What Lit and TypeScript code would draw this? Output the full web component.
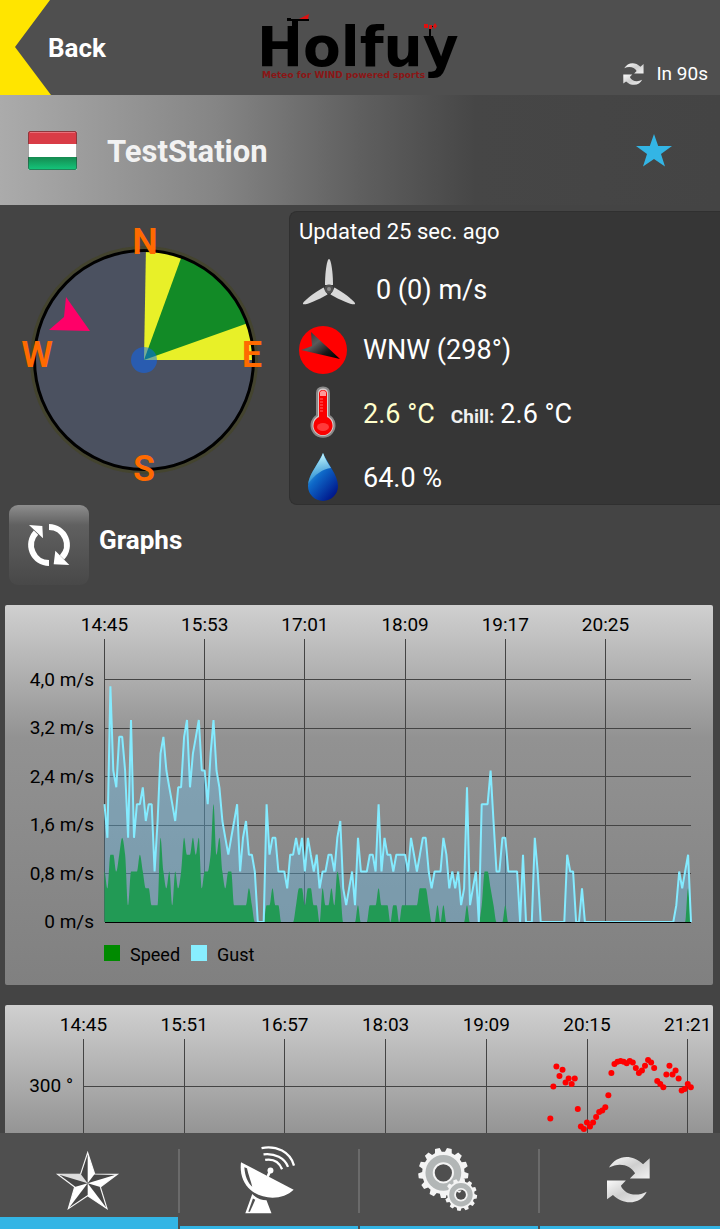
import { LitElement, html, svg, css } from "lit";
import { customElement } from "lit/decorators.js";

const KMH = 1 / 3.6;

// Five-hour history, one sample every two minutes, in km/h.
const GUST = [
  7, 5, 14, 9, 8, 11, 11, 9, 5, 12, 5, 7, 7, 8, 6, 7, 7, 3, 6, 10, 11, 9, 8, 7, 6, 8, 8, 11, 12, 8, 10, 11, 12, 9, 9, 7, 10,
  12, 9, 8, 6, 5, 4, 5, 6, 7, 3, 5, 6, 4, 4, 3, 0, 0, 0, 7, 4, 5, 5, 3, 3, 3, 2, 4, 4, 5, 4, 5, 3, 5, 4, 3, 4, 2, 3, 3, 4, 4,
  3, 5, 6, 2, 1, 2, 3, 1, 5, 3, 3, 3, 4, 4, 3, 7, 3, 5, 4, 4, 3, 4, 4, 4, 4, 3, 5, 4, 3, 4, 5, 5, 3, 2, 3, 3, 3, 5, 4, 2, 3,
  2, 3, 1, 2, 8, 1, 2, 3, 0, 7, 7, 7, 9, 6, 3, 3, 5, 5, 3, 3, 3, 3, 0, 4, 0, 0, 0, 5, 3, 0, 0, 0, 0, 0, 0, 0, 0, 0, 4, 3, 3,
  0, 0, 2, 0, ...Array(30).fill(0), 1, 3, 2, 3, 4, 0,
];
const SPEED = [
  3, 2, 4, 4, 3, 4, 5, 4, 1, 3, 3, 3, 4, 3, 2, 2, 1, 1, 1, 5, 3, 2, 3, 1, 3, 2, 3, 5, 4, 4, 5, 4, 5, 2, 3, 3, 4, 7, 4, 5, 3,
  2, 3, 3, 1, 1, 1, 1, 1, 2, 1, 0, 0, 0, 0, 1, 1, 2, 1, 1, 0, 0, 0, 0, 0, 1, 2, 2, 1, 2, 2, 1, 1, 0, 2, 1, 1, 2, 1, 3, 2, 0,
  0, 0, 0, 0, 1, 0, 0, 0, 1, 1, 1, 2, 1, 1, 1, 0, 1, 1, 0, 1, 1, 1, 1, 1, 1, 2, 2, 2, 1, 0, 0, 1, 0, 1, 0, 0, 0, 0, 0, 0, 0,
  1, 0, 0, 0, 0, 1, 3, 3, 2, 1, 0, 0, 0, 1, 0, ...Array(60).fill(0), 2, 0,
];
const HEADING = [
  260, 300, 325, 313, 321, 305, 310, 303, 310, 272, 250, 247, 255, 250, 255, 262, 268, 270, 274, 289, 317, 328, 331, 332, 331,
  329, 332, 330, 323, 317, 320, 326, 333, 330, 323, 307, 303, 299, 315, 326, 315, 320, 310, 295, 297, 303, 299,
];

type Pt = [number, number];

const linePath = (pts: Pt[]) => "M" + pts.map(([x, y]) => `${x.toFixed(1)},${y.toFixed(1)}`).join("L");

// Monotone cubic through the points, so that peaks stay rounded and never overshoot.
function smoothPath(pts: Pt[]) {
  const n = pts.length;
  const slope = (i: number) => (pts[i + 1][1] - pts[i][1]) / (pts[i + 1][0] - pts[i][0]);
  const tan = pts.map((_, i) => {
    if (i === 0 || i === n - 1) return 0;
    const a = slope(i - 1);
    const b = slope(i);
    return a * b <= 0 ? 0 : (2 * a * b) / (a + b);
  });
  let d = `M${pts[0][0]},${pts[0][1]}`;
  for (let i = 0; i < n - 1; i++) {
    const h = (pts[i + 1][0] - pts[i][0]) / 3;
    const [x0, y0] = pts[i];
    const [x1, y1] = pts[i + 1];
    d += `C${(x0 + h).toFixed(2)},${(y0 + tan[i] * h).toFixed(2)} ${(x1 - h).toFixed(2)},${(y1 - tan[i + 1] * h).toFixed(2)} ${x1.toFixed(2)},${y1.toFixed(2)}`;
  }
  return d;
}

function gearPath(cx: number, cy: number, base: number, tip: number, teeth: number) {
  const pts: Pt[] = [];
  const step = (Math.PI * 2) / teeth;
  for (let i = 0; i < teeth; i++) {
    const shape: [number, number][] = [[-0.34, base], [-0.2, tip], [0.2, tip], [0.34, base]];
    for (const [o, r] of shape) {
      const a = (i + o + 0.25) * step;
      pts.push([cx + Math.cos(a) * r, cy + Math.sin(a) * r]);
    }
  }
  return linePath(pts) + "Z";
}

const refreshShape = svg`
  <defs>
    <linearGradient id="silver" x1="0" y1="0" x2="1" y2="1">
      <stop offset="0" stop-color="#fafafa" /><stop offset=".5" stop-color="#cfcfcf" /><stop offset="1" stop-color="#f2f2f2" />
    </linearGradient>
  </defs>
  <path fill="url(#silver)" d="M6,34C26,0 71,-12 109,24L129,6V67H69L85,51C71,25 36,17 6,34Z" />
  <path fill="url(#silver)" d="M0,73H57L42,89C51,113 86,125 120,107C106,140 56,154 18,117L0,130Z" />`;

@customElement("wind-compass")
class WindCompass extends LitElement {
  static styles = css`
    :host { display: block; }
    svg { display: block; width: 100%; height: auto; }
    .mark { font: 600 36px Roboto, sans-serif; fill: #ff6a00; text-anchor: middle; }
  `;
  private wedge(from: number, to: number, r: number) {
    const p = (deg: number) => {
      const a = (deg * Math.PI) / 180;
      return `${(Math.sin(a) * r).toFixed(2)},${(-Math.cos(a) * r).toFixed(2)}`;
    };
    return `M0,0L${p(from)}A${r},${r} 0 0 1 ${p(to)}Z`;
  }
  render() {
    return html`<svg viewBox="-144 -155 288 300" role="img" aria-label="Wind direction compass">
      <circle r="112" fill="none" stroke="#44442f" stroke-width="4" />
      <circle r="109" fill="#4b5160" />
      <path d=${this.wedge(1, 90, 109)} fill="#e8f028" />
      <path d=${this.wedge(20, 70.5, 109)} fill="#128a26" />
      <circle r="109.500" fill="none" stroke="#000" stroke-width="3" />
      <circle r="13" fill="#0767ff" fill-opacity=".5" />
      <path d="M-78,-63L-54,-29L-95,-30L-80,-43Z" fill="#ff0068" />
      <text class="mark" x="1" y="-106">N</text>
      <text class="mark" x="108" y="7">E</text>
      <text class="mark" x="0" y="121">S</text>
      <text class="mark" x="-107" y="7">W</text>
    </svg>`;
  }
}

const chartStyles = css`
  :host { display: block; background: linear-gradient(#d0d0d0, #929292 35%, #808080); border-radius: 2px; }
  svg { display: block; width: 100%; height: auto; }
  text { font: 19px Roboto, sans-serif; fill: #000; }
  .time { text-anchor: middle; }
  .value { text-anchor: end; }
  .legend { font-size: 18px; }
  .grid { stroke: #444; stroke-width: 1; shape-rendering: crispEdges; }
  .base { stroke: #000; stroke-width: 1; shape-rendering: crispEdges; }
`;

@customElement("speed-chart")
class SpeedChart extends LitElement {
  static styles = chartStyles;
  render() {
    const left = 99.5;
    const right = 686;
    const bottom = 317;
    const perMs = 60.6;
    const toPts = (data: number[]): Pt[] =>
      data.map((v, i) => [left + (i * (right - left)) / (data.length - 1), bottom - v * KMH * perMs]);
    const close = `L${right},${bottom}L${left},${bottom}Z`;
    const gust = linePath(toPts(GUST));
    const times = ["14:45", "15:53", "17:01", "18:09", "19:17", "20:25"];
    const levels = ["0", "0,8", "1,6", "2,4", "3,2", "4,0"];
    return html`<svg viewBox="0 0 708 380" role="img" aria-label="Wind speed and gust">
      ${times.map((t, i) => {
        const x = left + i * 100.2;
        return svg`<text class="time" x=${x} y="26">${t}</text><line class="grid" x1=${x} x2=${x} y1="34" y2=${bottom} />`;
      })}
      ${levels.map((l, i) => {
        const y = bottom - i * 48.5;
        return svg`<text class="value" x="89" y=${y + 6}>${l} m/s</text><line class="grid" x1=${left} x2=${right} y1=${y} y2=${y} />`;
      })}
      <path d=${gust + close} fill="#64c5fa" fill-opacity=".33" />
      <path d=${smoothPath(toPts(SPEED)) + close} fill="#229a55" />
      <path d=${gust} fill="none" stroke="#84ebff" stroke-width="2" stroke-linejoin="bevel" />
      <line class="base" x1=${left} x2=${right} y1="317.5" y2="317.5" />
      <rect x="99" y="340" width="16" height="16" fill="#008a00" />
      <text class="legend" x="125" y="356">Speed</text>
      <rect x="186" y="340" width="16" height="16" fill="#88eeff" />
      <text class="legend" x="212" y="356">Gust</text>
    </svg>`;
  }
}

@customElement("direction-chart")
class DirectionChart extends LitElement {
  static styles = chartStyles;
  render() {
    const times = ["14:45", "15:51", "16:57", "18:03", "19:09", "20:15", "21:21"];
    const level = 81.5;
    return html`<svg viewBox="0 0 708 380" role="img" aria-label="Wind direction">
      ${times.map((t, i) => {
        const x = 78.5 + i * 100.7;
        return svg`<text class="time" x=${x} y="26">${t}</text><line class="grid" x1=${x} x2=${x} y1="34" y2="317" />`;
      })}
      <text class="value" x="68" y="87">300 °</text>
      <line class="grid" x1="78.500" x2="686" y1=${level} y2=${level} />
      ${HEADING.map((h, i) => svg`<circle cx=${545.3 + i * 3.055} cy=${level - (h - 300) * 0.8} r="3" fill="#f00" />`)}
    </svg>`;
  }
}

@customElement("app-root")
class AppRoot extends LitElement {
  static styles = css`
    :host {
      display: flex;
      flex-direction: column;
      height: 100vh;
      background: #444;
      color: #fff;
      font-family: Roboto, sans-serif;
    }
    * { box-sizing: border-box; }
    button { border: 0; padding: 0; margin: 0; background: none; color: inherit; font: inherit; cursor: pointer; }
    h1, h2, ul, p { margin: 0; padding: 0; font-weight: inherit; }
    svg { display: block; flex: none; overflow: visible; }

    .top { display: grid; grid-template-columns: 1fr auto 1fr; flex: none; height: 95px; background: #4f4f4f; }
    .back { display: flex; align-items: center; justify-self: start; font-size: 26px; font-weight: 700; }
    .timer { display: flex; align-items: center; justify-self: end; align-self: end; gap: 12px; padding: 0 12px 8px 0; font-size: 19px; line-height: 26px; }
    .brand { font: 700 55px "DejaVu Sans", sans-serif; }
    .motto { font: 700 9px "DejaVu Sans", sans-serif; fill: #8a1616; }

    .station { display: flex; align-items: center; flex: none; height: 110px; padding: 0 48px 0 28px; background: linear-gradient(90deg, #ababab, #858585 30%, #5f5f5f 50%, #464646 66%, #444); }
    .name { flex: 1; padding: 2px 0 0 30px; font-size: 31px; font-weight: 700; color: #f2f2f2; }

    .content { flex: 1; min-height: 0; overflow-y: auto; scrollbar-width: none; }
    .current { display: grid; grid-template-columns: 2fr 3fr; }
    .readings { margin: 6px 0 0 1px; padding: 6px 9px 2px; background: #363636; border: solid #303030; border-width: 1px 0 1px 1px; border-radius: 8px 0 0 8px; }
    .updated { padding-bottom: 20px; font-size: 22px; line-height: 28px; }
    .rows { display: flex; flex-direction: column; gap: 12px; }
    .row { display: flex; align-items: center; gap: 16px; height: 48px; font-size: 27px; white-space: nowrap; }
    .tall { height: 56px; }
    .temp { color: #ffffcc; }
    .chill { font-size: 19px; font-weight: 700; color: #f0f0f0; padding-right: 6px; }

    .graphs { display: flex; align-items: start; gap: 10px; padding: 0 9px 20px; }
    .switch { display: grid; place-items: center; width: 80px; height: 80px; border-radius: 9px; background: linear-gradient(#8e8e8e, #606060 25%, #484848); }
    .heading { font-size: 26px; font-weight: 700; line-height: 70px; }
    .charts { display: flex; flex-direction: column; gap: 20px; padding: 0 7px 20px 5px; }

    .tabs { display: grid; grid-template-columns: repeat(4, 1fr); flex: none; height: 96px; background: #4f4f4f; }
    .cell { display: flex; align-items: center; list-style: none; }
    .cell::after { content: ""; width: 2px; height: 64px; background: #6a6a6a; }
    .cell:last-child::after { display: none; }
    .tab { display: grid; place-items: center; flex: 1; height: 100%; padding-right: 3px; border-bottom: 3px solid #33b5e5; }
    .tab.active { border-bottom-width: 12px; }
    .tab.active svg { margin-top: 12px; }
  `;

  private get starIcon() {
    const tips: Pt[] = [[264, 84], [353, 149], [322, 252], [206, 252], [174, 149]];
    const dips: Pt[] = [[285, 148], [302, 187], [264, 213], [225, 187], [243, 148]];
    const outline = tips.map((t, i) => `${t} ${dips[i]}`).join(" ");
    return html`<svg width="61" height="58" viewBox="172 82 183 174" aria-hidden="true">
      <polygon points=${outline} fill="#464646" stroke="#f6f6f6" stroke-width="3.500" />
      ${tips.map((t, i) => svg`<polygon points="264,176 ${t} ${dips[i]}" fill=${i === 4 ? "#dcdcdc" : "#fff"} />`)}
    </svg>`;
  }
  private get dishIcon() {
    return html`<svg width="53" height="69" viewBox="723 64 160 208" aria-hidden="true">
      <path fill="#fff" d="M723,116L882,199C850,230 790,231 752,200C728,178 719,150 723,116Z" />
      <path fill="#4f4f4f" d="M733,131C735,157 742,176 757,190C753,171 745,154 741,134Z" />
      <path fill="#fff" d="M757,212C770,225 785,230 800,231L815,270H736Z" />
      <path fill="#4f4f4f" d="M759,225L745,265H750L766,229Z" />
      <circle cx="812" cy="141" r="9" fill="#fff" />
      <path fill="none" stroke="#fff" stroke-width="8" stroke-linecap="round" d="M810,144L805,156" />
      <path fill="none" stroke="#fff" stroke-width="7" d="M796,109C820,105 838,115 847,137M791,92C825,88 855,103 865,130M785,73C830,64 872,85 883,126" />
    </svg>`;
  }
  private get gearIcon() {
    return html`<svg width="59" height="63" viewBox="177 74 177 190" aria-hidden="true">
      <path fill="#f4f4f4" d=${gearPath(253, 149, 64, 76, 13)} />
      <circle cx="253" cy="149" r="43" fill="none" stroke="#b2b6b6" stroke-width="22" />
      <circle cx="253" cy="149" r="26" fill="#4f4f4f" />
      <path fill="#f4f4f4" d=${gearPath(306, 215, 41, 49, 12)} />
      <circle cx="306" cy="215" r="28" fill="none" stroke="#b2b6b6" stroke-width="15" />
      <circle cx="306" cy="215" r="15" fill="#4f4f4f" />
      <path fill="#f4f4f4" d="M292,203L308,202L303,209L298,208Z" />
    </svg>`;
  }

  render() {
    return html`
      <header class="top">
        <button class="back">
          <svg width="48" height="95" viewBox="0 0 48 95" aria-hidden="true"><path fill="#ffe500" d="M0,0H50L15,47L51,95H0Z" /></svg>
          Back
        </button>
        <svg width="200" height="95" viewBox="260 0 200 95" role="img" aria-label="Holfuy">
          <text class="brand" x="257" y="66">Holfuy</text>
          <text class="motto" x="262" y="78">Meteo for WIND powered sports</text>
          <path d="M287,18H291V19H309V21H298V27H292V21H287Z" />
          <path d="M299,19L309,14L308,19Z" fill="#d11" />
          <path d="M429,26H433V27H431V37H429Z" />
          <path d="M424,24H428V28H424ZM433,26L435,23L437,26L435,29ZM429,25H432V29H429Z" fill="#d11" />
        </svg>
        <div class="timer">
          <svg width="21" height="22" viewBox="0 0 130 140" aria-hidden="true">${refreshShape}</svg>
          <span>In 90s</span>
        </div>
      </header>

      <div class="station">
        <svg width="49" height="39" viewBox="0 0 49 39" role="img" aria-label="Hungary">
          <defs>
            <linearGradient id="green" x1="0" y1="0" x2="0" y2="1"><stop offset="0" stop-color="#158a50" /><stop offset="1" stop-color="#14c87c" /></linearGradient>
          </defs>
          <rect width="49" height="39" rx="1.500" fill="#fff" />
          <path d="M0,13V2Q0,0 2,0H47Q49,0 49,2V13Z" fill="#d93c46" />
          <path d="M0,26H49V37Q49,39 47,39H2Q0,39 0,37Z" fill="url(#green)" />
          <path d="M2,1.500H47" stroke="#e8707a" />
          <rect x=".5" y=".5" width="48" height="38" rx="1.500" fill="none" stroke="#333" stroke-opacity=".45" />
        </svg>
        <h1 class="name">TestStation</h1>
        <button aria-label="Favourite">
          <svg width="36" height="33" viewBox="0 0 36 33" aria-hidden="true"><path fill="#33b5e5" d="M18,0L22.200,12H36L25,20L29,32.500L18,25L7,32.500L11,20L0,12H13.800Z" /></svg>
        </button>
      </div>

      <main class="content">
        <section class="current">
          <wind-compass></wind-compass>
          <div class="readings">
            <p class="updated">Updated 25 sec. ago</p>
            <div class="rows">
              <div class="row">
                <svg width="61" height="48" viewBox="-30 -23 61 48" aria-hidden="true">
                  ${[0, 120, 240].map((a) => svg`<path transform="rotate(${a})" fill="#d8d8d8" d="M0,-30C2,-30 4,-17 4,-4H-4C-4,-17 -2,-30 0,-30Z" />`)}
                  <circle r="4.500" fill="#505050" /><circle r="2" fill="#8c8c8c" />
                </svg>
                <span>0 (0) m/s</span>
              </div>
              <div class="row">
                <svg width="48" height="48" viewBox="-24 -24 48 48" aria-hidden="true">
                  <defs><linearGradient id="needle" x1=".1" y1=".1" x2="1" y2=".9"><stop offset="0" stop-color="#333" /><stop offset=".35" stop-color="#5a5a5a" /><stop offset=".7" stop-color="#181818" /><stop offset="1" stop-color="#000" /></linearGradient></defs>
                  <circle r="24" fill="#f00" />
                  <path fill="url(#needle)" d="M-12,-18L17,9L-22,0L-11,-4Z" />
                </svg>
                <span>WNW (298°)</span>
              </div>
              <div class="row tall">
                <svg width="48" height="56" viewBox="0 0 48 56" aria-hidden="true">
                  <path fill="#d8cccc" stroke="#8a8a8a" stroke-width="2" d="M18,7Q18,1.500 24,1.500T30,7V29.500A11.500,11.500 0 1 1 18,29.500Z" />
                  <path fill="#fa0000" d="M20,8Q20,4 24,4T28,8V31A9.500,9.500 0 1 1 20,31Z" />
                  <path d="M21,6Q24,3 27,6V10H21Z" fill="#f99" />
                  <path d="M21,13H24M21,16H24M21,19H24M21,22H24M21,25H24" stroke="#f66" />
                  <ellipse cx="24" cy="41" rx="6" ry="4" fill="#ff3a3a" />
                </svg>
                <span class="temp">2.6 °C</span>
                <span><span class="chill">Chill:</span>2.6 °C</span>
              </div>
              <div class="row">
                <svg width="48" height="48" viewBox="0 0 48 48" aria-hidden="true">
                  <defs>
                    <linearGradient id="drop" x1="0" y1="0" x2=".7" y2="1"><stop offset=".1" stop-color="#58c4ea" /><stop offset=".5" stop-color="#0e68c8" /><stop offset="1" stop-color="#00188c" /></linearGradient>
                    <linearGradient id="shine" x1="0" y1="0" x2="0" y2="1"><stop offset="0" stop-color="#c8f6ff" /><stop offset="1" stop-color="#4ab0dc" stop-opacity=".4" /></linearGradient>
                  </defs>
                  <path fill="url(#drop)" d="M24,-1C28,9 39,21 39,32A15,15 0 0 1 9,32C9,21 20,9 24,-1Z" />
                  <path fill="url(#shine)" d="M24,-1C26,5 29,9 32,14C24,15 16,20 9,30C11,18 21,8 24,-1Z" />
                </svg>
                <span>64.0 %</span>
              </div>
            </div>
          </div>
        </section>

        <section>
          <div class="graphs">
            <button class="switch" aria-label="Reload graphs">
              <svg width="42" height="42" viewBox="84 87 126 126" aria-hidden="true">
                <path fill="none" stroke="#fff" stroke-width="18" d="M147,96A54,54 0 0 1 186,187M147,204A54,54 0 0 1 108,113" />
                <path fill="#fff" d="M166,167L161,208L208,210ZM87,90L127,93L129,130Z" />
              </svg>
            </button>
            <h2 class="heading">Graphs</h2>
          </div>
          <div class="charts">
            <speed-chart></speed-chart>
            <direction-chart></direction-chart>
          </div>
        </section>
      </main>

      <nav>
        <ul class="tabs">
          <li class="cell"><button class="tab active" aria-label="Favourites">${this.starIcon}</button></li>
          <li class="cell"><button class="tab" aria-label="Stations">${this.dishIcon}</button></li>
          <li class="cell"><button class="tab" aria-label="Settings">${this.gearIcon}</button></li>
          <li class="cell">
            <button class="tab" aria-label="Refresh">
              <svg width="43" height="47" viewBox="0 0 130 140" aria-hidden="true">${refreshShape}</svg>
            </button>
          </li>
        </ul>
      </nav>
    `;
  }
}
